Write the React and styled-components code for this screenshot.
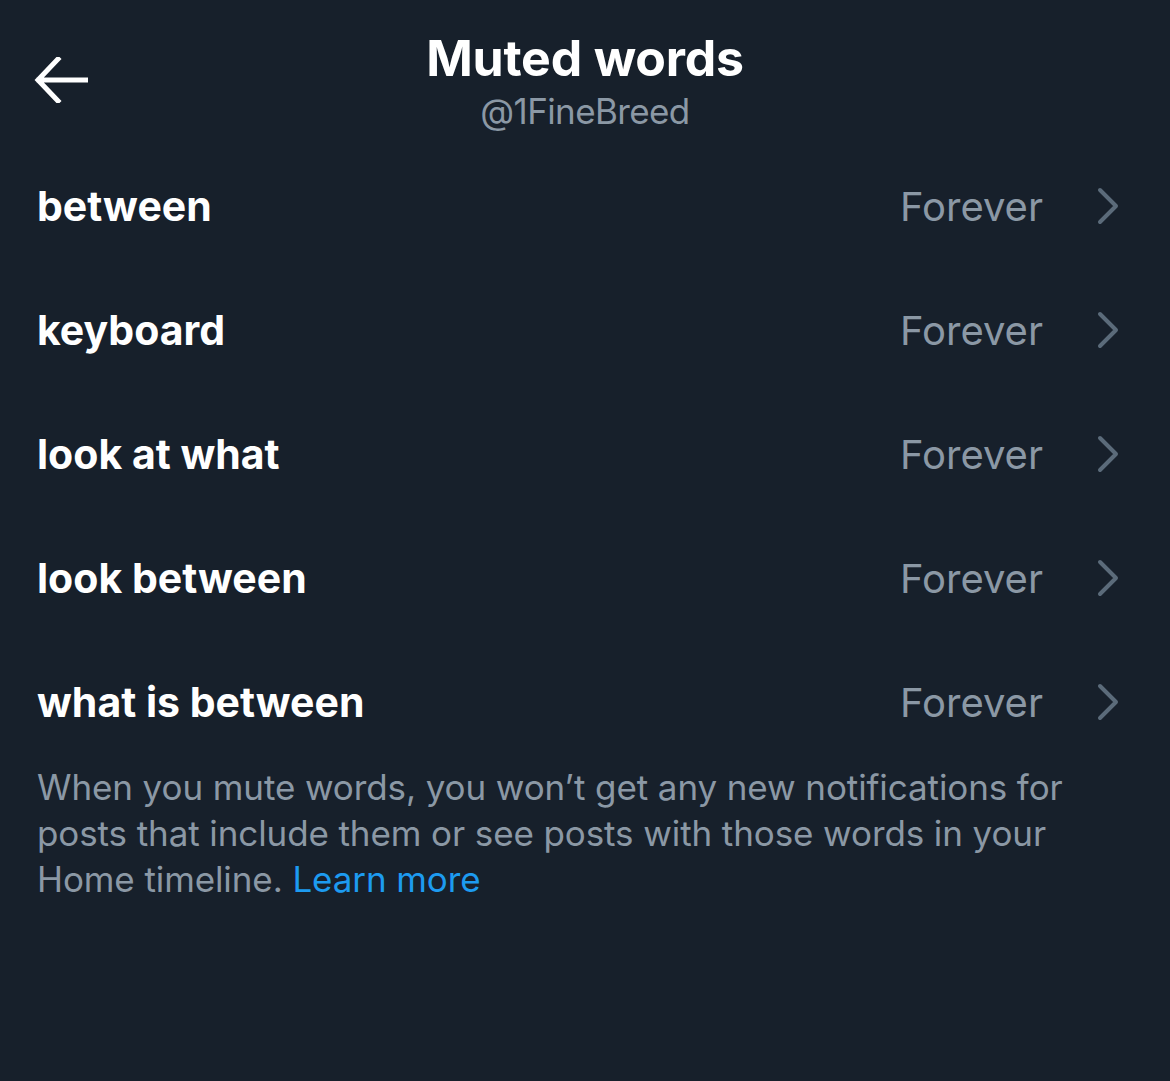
import React from "react";
import styled, { createGlobalStyle } from "styled-components";

const Global = createGlobalStyle`
  html, body { margin: 0; padding: 0; background: #17202b; }
  body { font-family: Inter, "Noto Sans", "Liberation Sans", sans-serif; -webkit-font-smoothing: antialiased; }
`;

const Page = styled.div`
  width: 1170px;
  min-height: 1081px;
  background: #17202b;
  color: #ffffff;
`;

const Header = styled.header`
  height: 144px;
  display: grid;
  grid-template-columns: 1fr auto 1fr;
  align-items: start;
  padding: 0 32px;
  box-sizing: border-box;
`;

const BackButton = styled.button`
  justify-self: start;
  margin-top: 55px;
  background: none;
  border: 0;
  padding: 0 0 0 2px;
  width: 58px;
  height: 50px;
  display: flex;
  align-items: center;
  color: #ffffff;
  cursor: pointer;
`;

const TitleBlock = styled.div`
  display: flex;
  flex-direction: column;
  align-items: center;
  padding-top: 28px;
`;

const Title = styled.h1`
  margin: 0;
  font-size: 50px;
  line-height: 60px;
  font-weight: 700;
  letter-spacing: -0.2px;
  color: #ffffff;
`;

const Handle = styled.div`
  font-size: 35px;
  line-height: 46px;
  color: #8b98a5;
  letter-spacing: -0.6px;
`;

const List = styled.ul`
  list-style: none;
  margin: 0;
  padding: 0;
`;

const Row = styled.li`
  height: 124px;
  display: flex;
  align-items: center;
  padding: 0 50px 0 37px;
`;

const Word = styled.span`
  flex: 1;
  font-size: 41px;
  font-weight: 700;
  color: #ffffff;
  letter-spacing: 0;
`;

const Duration = styled.span`
  font-size: 40px;
  color: #8b98a5;
  letter-spacing: 0;
  margin-right: 53px;
`;

const Footer = styled.p`
  margin: 0;
  padding: 0 37px;
  width: 1050px;
  font-size: 35px;
  line-height: 46px;
  color: #8b98a5;
  letter-spacing: -0.1px;
`;

const LearnMore = styled.a`
  color: #1d9bf0;
  text-decoration: none;
`;

const ArrowLeft = () => (
  <svg width="54" height="46" viewBox="0 0 54 46" fill="none">
    <path d="M52 23H5M24 2L4 23l20 21" stroke="#fff" strokeWidth="5" strokeLinecap="square" />
  </svg>
);

const Chevron = () => (
  <svg width="24" height="38" viewBox="0 0 24 38" fill="none">
    <path d="M4 3l16 16L4 35" stroke="#5b6b7a" strokeWidth="4" strokeLinecap="round" strokeLinejoin="round" />
  </svg>
);

const words = ["between", "keyboard", "look at what", "look between", "what is between"];

export default function App() {
  return (
    <Page>
      <Global />
      <Header>
        <BackButton aria-label="Back">
          <ArrowLeft />
        </BackButton>
        <TitleBlock>
          <Title>Muted words</Title>
          <Handle>@1FineBreed</Handle>
        </TitleBlock>
        <div />
      </Header>
      <List>
        {words.map((w) => (
          <Row key={w}>
            <Word>{w}</Word>
            <Duration>Forever</Duration>
            <Chevron />
          </Row>
        ))}
      </List>
      <Footer>
        When you mute words, you won’t get any new notifications for posts that include them or see posts with those words in your Home timeline. <LearnMore href="#">Learn more</LearnMore>
      </Footer>
    </Page>
  );
}
